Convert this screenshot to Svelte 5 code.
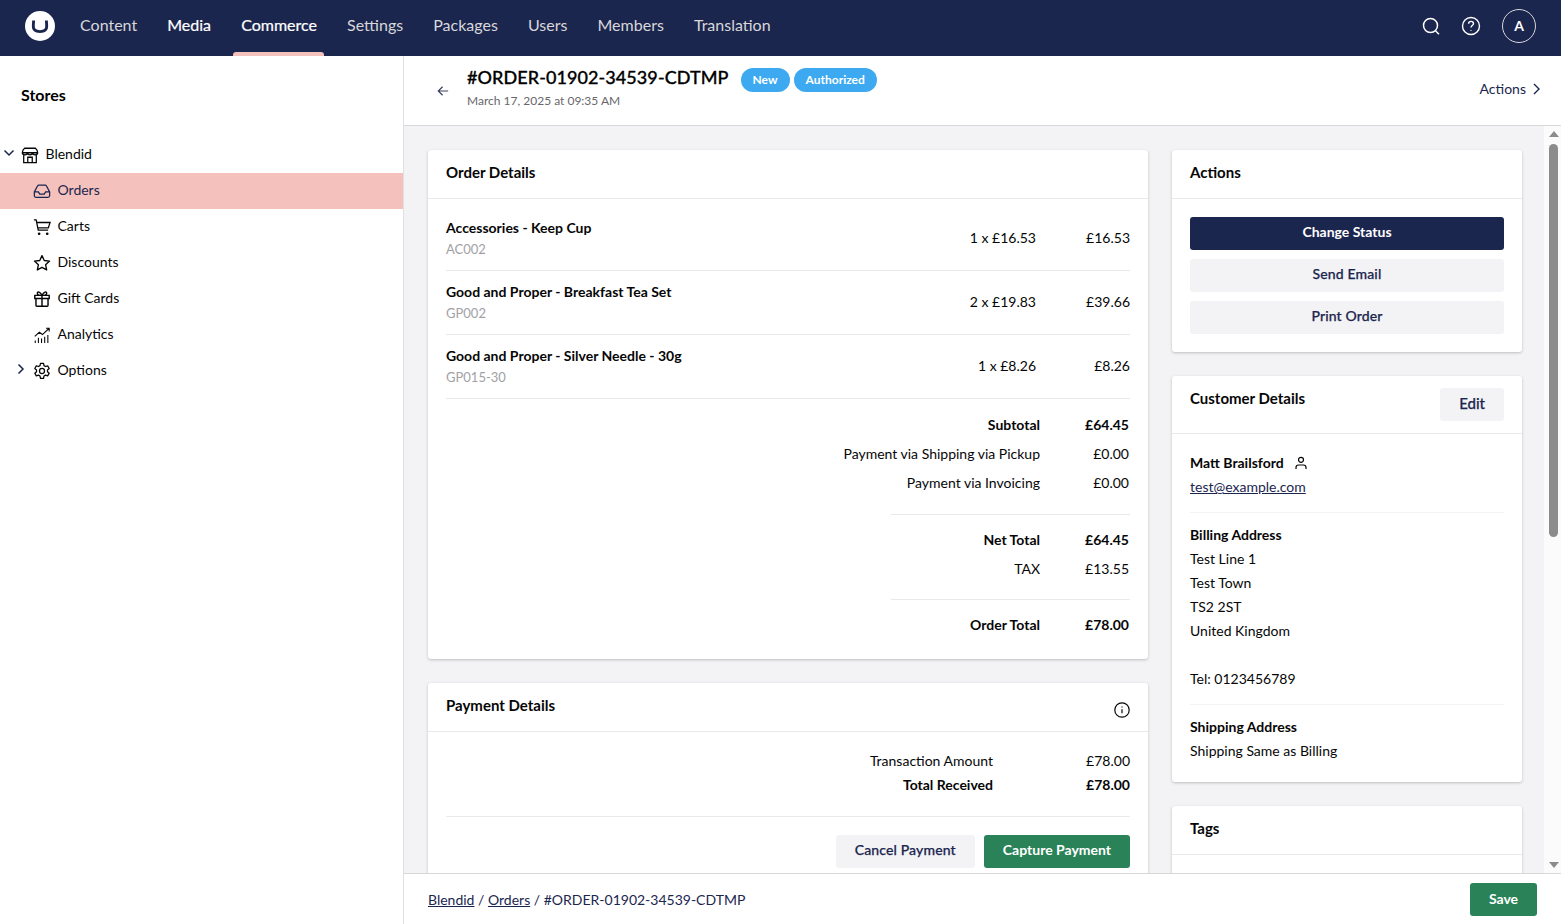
<script>
  const sections = [
    { label: "Content" },
    { label: "Media", bright: true },
    { label: "Commerce", active: true },
    { label: "Settings" },
    { label: "Packages" },
    { label: "Users" },
    { label: "Members" },
    { label: "Translation" }
  ];
  const items = [
    { name: "Accessories - Keep Cup", sku: "AC002", qty: "1 x £16.53", total: "£16.53" },
    { name: "Good and Proper - Breakfast Tea Set", sku: "GP002", qty: "2 x £19.83", total: "£39.66" },
    { name: "Good and Proper - Silver Needle - 30g", sku: "GP015-30", qty: "1 x £8.26", total: "£8.26" }
  ];
</script>

<div class="app">
  <header class="topbar">
    <svg class="logo" viewBox="0 0 30 30" width="30" height="30">
      <circle cx="15" cy="15" r="15" fill="#fff" />
      <path d="M8.600 9.500 8.300 15c-.2 3.800 2 5.600 6.700 5.600s6.900-1.800 6.700-5.600L21.400 9.500" fill="none" stroke="#1b264f" stroke-width="2.900" />
    </svg>
    <nav class="sections">
      {#each sections as s}
        <a class="section" class:bright={s.bright} class:active={s.active}>{s.label}</a>
      {/each}
    </nav>
    <div class="tools">
      <svg viewBox="0 0 20 20" width="20" height="20" fill="none" stroke="#fff" stroke-width="1.500"><circle cx="9.500" cy="9.500" r="7" /><path d="m14.500 14.800 3.500 3.500" /></svg>
      <svg viewBox="0 0 20 20" width="20" height="20" fill="none" stroke="#fff" stroke-width="1.400"><circle cx="10" cy="10" r="8.500" /><path d="M7.600 7.800c0-1.500 1.100-2.400 2.500-2.400s2.400.9 2.400 2.200c0 1.900-2.500 2-2.500 3.900" /><path d="M10 14.300v.6" /></svg>
      <div class="avatar">A</div>
    </div>
  </header>

  <div class="shell">
    <aside class="sidebar">
      <h2>Stores</h2>
      <ul class="tree">
        <li class="store">
          <svg class="caret" viewBox="0 0 12 12" width="12" height="12" fill="none" stroke="#1b264f" stroke-width="1.500"><path d="m1.500 3.500 4.500 4.500 4.500-4.500" /></svg>
          <svg viewBox="0 0 20 20" width="18" height="18" fill="none" stroke="#060606" stroke-width="1.400"><path d="M4 2.500h12q2.500 2 2.500 5H1.500q0-3 2.500-5zM1.500 7.500c0 3 5.600 3 5.700 0 .1 3 5.500 3 5.600 0 .1 3 5.700 3 5.700 0M3 10v8.500h14V10M7.500 18.500v-6h5v6" /></svg>
          <span>Blendid</span>
        </li>
        <li class="child selected">
          <svg viewBox="0 0 20 20" width="18" height="18" fill="none" stroke="#1b264f" stroke-width="1.400"><path d="M1.500 11 5 4.500q.5-1 1.500-1h7q1 0 1.500 1l3.500 6.500v4q0 2-2 2h-13q-2 0-2-2zM1.500 11H6l1.500 2.500h5L14 11h4.500" /></svg>
          <span>Orders</span>
        </li>
        <li class="child">
          <svg viewBox="0 0 20 20" width="18" height="18" fill="none" stroke="#060606" stroke-width="1.400"><path d="M1 2h2.500l2.300 11.500h11M4.200 5H19l-2 6H5.400" /><circle cx="6.800" cy="17.500" r=".8" fill="#060606" /><circle cx="15.800" cy="17.500" r=".8" fill="#060606" /></svg>
          <span>Carts</span>
        </li>
        <li class="child">
          <svg viewBox="0 0 20 20" width="18" height="18" fill="none" stroke="#060606" stroke-width="1.500" stroke-linejoin="round"><path d="m10 1.800 2.500 5.400 5.900.7-4.400 4 1.200 5.800-5.200-2.900-5.200 2.900L6 11.900l-4.400-4 5.900-.7z" /></svg>
          <span>Discounts</span>
        </li>
        <li class="child">
          <svg viewBox="0 0 20 20" width="18" height="18" fill="none" stroke="#060606" stroke-width="1.600"><path d="M2 6h16v3.500H2zM3.300 9.500V17q0 1 1 1h11.400q1 0 1-1V9.500M10 6v12M10 6C8 2 4.800 1.200 4.800 3.500 4.800 5.400 7.500 6 10 6c2.500 0 5.200-.6 5.200-2.500C15.200 1.200 12 2 10 6" /></svg>
          <span>Gift Cards</span>
        </li>
        <li class="child">
          <svg viewBox="0 0 20 20" width="18" height="18" fill="none" stroke="#060606" stroke-width="1.200"><path d="M2 11.500 7 7l3.500 2.500L18 2.500M14.500 2.500H18v3.500M2.500 19v-3M6 19v-6M9.500 19v-5M13 19v-7M16.500 19v-9" /></svg>
          <span>Analytics</span>
        </li>
        <li class="child">
          <svg class="caret-closed" viewBox="0 0 12 12" width="12" height="12" fill="none" stroke="#1b264f" stroke-width="1.500"><path d="m3.500 1.500 4.500 4.500-4.500 4.500" /></svg>
          <svg viewBox="0 0 20 20" width="18" height="18" fill="none" stroke="#060606" stroke-width="1.400" stroke-linejoin="round"><path d="m8.300 1.500h3.400l.5 2.500 1.700 1 2.400-.8 1.700 3-1.900 1.600v2l1.900 1.600-1.700 3-2.400-.8-1.700 1-.5 2.500H8.300l-.5-2.500-1.700-1-2.400.8-1.700-3 1.900-1.600v-2L2 7.200l1.700-3 2.400.8 1.700-1z" /><circle cx="10" cy="10" r="2.800" /></svg>
          <span>Options</span>
        </li>
      </ul>
    </aside>

    <main class="workspace">
      <div class="ws-head">
        <svg class="back" viewBox="0 0 14 14" width="12" height="12" fill="none" stroke="#3a4260" stroke-width="1.400"><path d="M13 7H1.500M6.500 2 1.500 7l5 5" /></svg>
        <div class="ws-title">
          <div class="title-row">
            <h1>#ORDER-01902-34539-CDTMP</h1>
            <span class="badge">New</span>
            <span class="badge">Authorized</span>
          </div>
          <div class="date">March 17, 2025 at 09:35 AM</div>
        </div>
        <div class="ws-actions">
          Actions
          <svg viewBox="1 0 8 12" width="8" height="12" fill="none" stroke="#1b264f" stroke-width="1.400"><path d="m3 1 5 5-5 5" /></svg>
        </div>
      </div>

      <div class="ws-middle">
        <div class="scroll">
          <div class="col">
            <section class="card order">
              <div class="card-head"><h3>Order Details</h3></div>
              <div class="order-body">
                {#each items as item}
                  <div class="line">
                    <div class="line-info">
                      <strong>{item.name}</strong>
                      <span class="sku">{item.sku}</span>
                    </div>
                    <div class="qty">{item.qty}</div>
                    <div class="line-total">{item.total}</div>
                  </div>
                {/each}
                <div class="totals">
                  <div class="sum b"><span>Subtotal</span><span>£64.45</span></div>
                  <div class="sum"><span>Payment via Shipping via Pickup</span><span>£0.00</span></div>
                  <div class="sum"><span>Payment via Invoicing</span><span>£0.00</span></div>
                  <div class="rule wide"></div>
                  <div class="sum b"><span>Net Total</span><span>£64.45</span></div>
                  <div class="sum"><span>TAX</span><span>£13.55</span></div>
                  <div class="rule"></div>
                  <div class="sum b"><span>Order Total</span><span>£78.00</span></div>
                </div>
              </div>
            </section>

            <section class="card payment">
              <div class="card-head">
                <h3>Payment Details</h3>
                <svg class="info" viewBox="0 0 16 16" width="16" height="16" fill="none" stroke="#060606" stroke-width="1.200"><circle cx="8" cy="8" r="7.200" /><path d="M8 7.200v4M8 4.400v1" /></svg>
              </div>
              <div class="payment-body">
                <div class="pay"><span>Transaction Amount</span><span>£78.00</span></div>
                <div class="pay b"><span>Total Received</span><span>£78.00</span></div>
                <div class="pay-rule"></div>
                <div class="pay-buttons">
                  <button class="btn">Cancel Payment</button>
                  <button class="btn green">Capture Payment</button>
                </div>
              </div>
            </section>
          </div>

          <div class="col">
            <section class="card">
              <div class="card-head"><h3>Actions</h3></div>
              <div class="action-body">
                <button class="btn navy">Change Status</button>
                <button class="btn">Send Email</button>
                <button class="btn">Print Order</button>
              </div>
            </section>

            <section class="card">
              <div class="card-head customer-head">
                <h3>Customer Details</h3>
                <button class="btn edit">Edit</button>
              </div>
              <div class="customer-body">
                <div class="block">
                  <div class="person">
                    <strong>Matt Brailsford</strong>
                    <svg viewBox="0 0 14 14" width="14" height="14" fill="none" stroke="#060606" stroke-width="1.200"><circle cx="7" cy="3.800" r="2.500" /><path d="M2 13v-1.500q0-2.500 2.500-2.500h5q2.500 0 2.500 2.500V13" /></svg>
                  </div>
                  <a class="mail">test@example.com</a>
                </div>
                <div class="block">
                  <strong>Billing Address</strong>
                  <div>Test Line 1</div>
                  <div>Test Town</div>
                  <div>TS2 2ST</div>
                  <div>United Kingdom</div>
                  <div class="tel">Tel: 0123456789</div>
                </div>
                <div class="block last">
                  <strong>Shipping Address</strong>
                  <div>Shipping Same as Billing</div>
                </div>
              </div>
            </section>

            <section class="card">
              <div class="card-head"><h3>Tags</h3></div>
              <div class="tags-body"></div>
            </section>
          </div>
        </div>

        <div class="scrollbar">
          <span class="arrow up"></span>
          <span class="thumb"></span>
          <span class="arrow down"></span>
        </div>
      </div>

      <footer class="ws-foot">
        <div class="crumbs">
          <a>Blendid</a> / <a>Orders</a> / #ORDER-01902-34539-CDTMP
        </div>
        <button class="btn green save">Save</button>
      </footer>
    </main>
  </div>
</div>

<style>
  :global(body) {
    margin: 0;
    font-family: Lato, "Liberation Sans", sans-serif;
    font-size: 14px;
    color: #060606;
  }
  .app {
    height: 924px;
    display: flex;
    flex-direction: column;
    overflow: hidden;
  }
  .topbar {
    height: 56px;
    flex: none;
    background: #1b264f;
    display: flex;
    align-items: center;
    padding: 0 25px;
  }
  .logo {
    margin: -5px 10px 0 0;
    flex: none;
  }
  .sections {
    display: flex;
    height: 100%;
  }
  .section {
    position: relative;
    padding: 0 15.06px;
    line-height: 49px;
    font-size: 16px;
    color: #d8d7d9;
  }
  .section.bright,
  .section.active {
    color: #fff;
    -webkit-text-stroke: 0.2px #fff;
  }
  .section.active::after {
    content: "";
    position: absolute;
    left: 7px;
    right: 8px;
    bottom: 0;
    height: 4px;
    background: #f5c1bc;
    border-radius: 3px 3px 0 0;
  }
  .tools {
    margin-left: auto;
    display: flex;
    align-items: center;
    gap: 20px;
    padding-bottom: 4px;
  }
  .avatar {
    width: 32px;
    height: 30px;
    padding-bottom: 2px;
    margin-left: 1px;
    border: 1px solid #d8d7d9;
    border-radius: 50%;
    color: #fff;
    font-weight: 700;
    font-size: 14px;
    display: flex;
    align-items: center;
    justify-content: center;
  }
  .shell {
    flex: 1;
    display: flex;
    min-height: 0;
  }
  .sidebar {
    width: 403px;
    flex: none;
    border-right: 1px solid #e0e0e2;
    box-sizing: content-box;
  }
  .sidebar h2 {
    margin: 0;
    padding: 29px 21px 0;
    font-size: 16px;
    line-height: 20px;
    font-weight: 700;
    color: #000;
  }
  .tree {
    list-style: none;
    margin: 32px 0 0;
    padding: 0;
  }
  .tree li {
    height: 36px;
    display: flex;
    align-items: center;
    gap: 7px;
    position: relative;
  }
  .tree li span {
    margin-bottom: 4px;
    margin-left: -0.5px;
  }
  .store {
    padding-left: 21px;
  }
  .child {
    padding-left: 33px;
  }
  .tree .selected {
    background: #f5c1bc;
    color: #1b264f;
  }
  .caret {
    position: absolute;
    left: 3px;
    top: 10px;
  }
  .caret-closed {
    position: absolute;
    left: 15px;
    top: 10px;
  }
  .workspace {
    flex: 1;
    min-width: 0;
    display: flex;
    flex-direction: column;
  }
  .ws-head {
    height: 69px;
    flex: none;
    border-bottom: 1px solid #d8d7d9;
    display: flex;
    align-items: center;
    padding: 0 21px 0 33px;
  }
  .back {
    margin: 0 18px 0 0;
  }
  .ws-title {
    margin-top: -9px;
  }
  .title-row {
    display: flex;
    align-items: center;
    gap: 4px;
    height: 26px;
  }
  h1 {
    margin: 0 8px 0 0;
    font-size: 18px;
    line-height: 26px;
    font-weight: 500;
    letter-spacing: 0.08px;
    -webkit-text-stroke: 0.3px #000;
    color: #000;
  }
  .badge {
    align-self: flex-end;
    margin-bottom: -2px;
    background: #3ca9f0;
    color: #fff;
    font-size: 12px;
    font-weight: 700;
    line-height: 24px;
    padding: 0 12px;
    border-radius: 12px;
  }
  .date {
    font-size: 12px;
    line-height: 17px;
    margin-top: 2px;
    color: #68676b;
  }
  .ws-actions {
    margin-left: auto;
    display: flex;
    align-items: center;
    gap: 6px;
    padding-bottom: 4px;
    color: #1b264f;
  }
  .ws-middle {
    flex: 1;
    min-height: 0;
    display: flex;
    background: #f3f3f5;
  }
  .scroll {
    flex: 1;
    min-width: 0;
    overflow: hidden;
    display: grid;
    grid-template-columns: 1fr 350px;
    gap: 24px;
    padding: 24px 22px 0 24px;
    align-items: start;
  }
  .col {
    display: flex;
    flex-direction: column;
    gap: 24px;
  }
  .card {
    background: #fff;
    border-radius: 3px;
    box-shadow: 0 1px 3px rgba(0, 0, 0, 0.22);
  }
  .card-head {
    height: 48px;
    border-bottom: 1px solid #e9e9eb;
    display: flex;
    padding: 0 18px;
    justify-content: space-between;
  }
  .card-head h3 {
    margin: 0;
    font-size: 15px;
    line-height: 44px;
    font-weight: 700;
    color: #060606;
  }
  .customer-head {
    height: 57px;
    align-items: flex-start;
  }
  .order-body {
    padding: 8px 18px 0;
  }
  .line {
    height: 61px;
    padding-bottom: 2px;
    border-bottom: 1px solid #e9e9eb;
    display: flex;
    align-items: center;
  }
  .line-info {
    flex: 1;
    display: flex;
    flex-direction: column;
  }
  strong {
    font-weight: 700;
  }
  .line-info strong {
    line-height: 21px;
    margin-top: 2px;
  }
  .sku {
    color: #a1a1a5;
    font-size: 13px;
    line-height: 21px;
    margin-top: 1px;
  }
  .qty {
    width: 110px;
    text-align: right;
  }
  .line-total {
    width: 94px;
    text-align: right;
  }
  .totals {
    padding: 11px 1px 20px;
  }
  .sum {
    display: flex;
    justify-content: flex-end;
    line-height: 29px;
  }
  .sum span:first-child {
    text-align: right;
  }
  .sum span:last-child {
    width: 89px;
    text-align: right;
  }
  .b {
    font-weight: 700;
  }
  .rule {
    height: 1px;
    background: #e9e9eb;
    margin: 16px -1px 10px 444px;
  }
  .rule.wide {
    margin-top: 17px;
  }
  .payment-body {
    padding: 17px 18px 0;
  }
  .pay {
    display: flex;
    justify-content: flex-end;
    line-height: 24px;
  }
  .pay span:last-child {
    width: 137px;
    text-align: right;
  }
  .pay-rule {
    height: 1px;
    background: #e9e9eb;
    margin: 19px 0 18px;
  }
  .pay-buttons {
    display: flex;
    justify-content: flex-end;
    gap: 9px;
    padding-bottom: 18px;
  }
  .info {
    margin-top: 19px;
  }
  .btn {
    font: inherit;
    font-weight: 500;
    height: 33px;
    border: 0;
    border-radius: 3px;
    padding: 0 19px 4px;
    background: #f3f3f5;
    color: #1b264f;
    letter-spacing: 0.01em;
    -webkit-text-stroke: 0.25px #1b264f;
  }
  .btn.green {
    background: #2a8358;
    color: #fff;
    font-weight: 700;
    letter-spacing: 0;
    -webkit-text-stroke: 0;
  }
  .btn.navy {
    background: #1b264f;
    color: #fff;
    font-weight: 700;
    letter-spacing: 0;
    -webkit-text-stroke: 0;
  }
  .action-body {
    padding: 18px;
    display: flex;
    flex-direction: column;
    gap: 9px;
  }
  .edit {
    margin: 12px 0 0;
    font-size: 15px;
    letter-spacing: 0;
  }
  .customer-body {
    padding: 17px 18px 0;
    line-height: 24px;
  }
  .block {
    border-bottom: 1px solid #f3f3f5;
    padding-bottom: 13px;
    margin-bottom: 10px;
  }
  .block.last {
    border: 0;
    padding-bottom: 19px;
    margin: 0;
  }
  .person {
    display: flex;
    align-items: center;
    gap: 10px;
  }
  .mail {
    color: #1b264f;
    text-decoration: underline;
  }
  .tel {
    margin-top: 24px;
  }
  .tags-body {
    height: 60px;
  }
  .scrollbar {
    width: 17px;
    flex: none;
    background: #fbfbfb;
    display: flex;
    flex-direction: column;
    align-items: center;
    padding: 5px 0 0 2px;
    box-sizing: border-box;
  }
  .thumb {
    width: 9px;
    height: 393px;
    margin-top: 7px;
    border-radius: 5px;
    background: #8c8c8c;
  }
  .arrow {
    width: 0;
    height: 0;
    border-left: 5px solid transparent;
    border-right: 5px solid transparent;
  }
  .arrow.up {
    border-bottom: 6px solid #8c8c8c;
  }
  .arrow.down {
    border-top: 6px solid #8c8c8c;
    margin-top: auto;
    margin-bottom: 5px;
  }
  .ws-foot {
    height: 50px;
    flex: none;
    border-top: 1px solid #d8d7d9;
    display: flex;
    align-items: center;
    justify-content: space-between;
    padding: 0 24px;
    background: #fff;
  }
  .crumbs a {
    color: #1b264f;
    text-decoration: underline;
  }
  .crumbs {
    color: #1b264f;
  }
  .save {
    width: 67px;
    padding: 0 0 2px;
  }
</style>
